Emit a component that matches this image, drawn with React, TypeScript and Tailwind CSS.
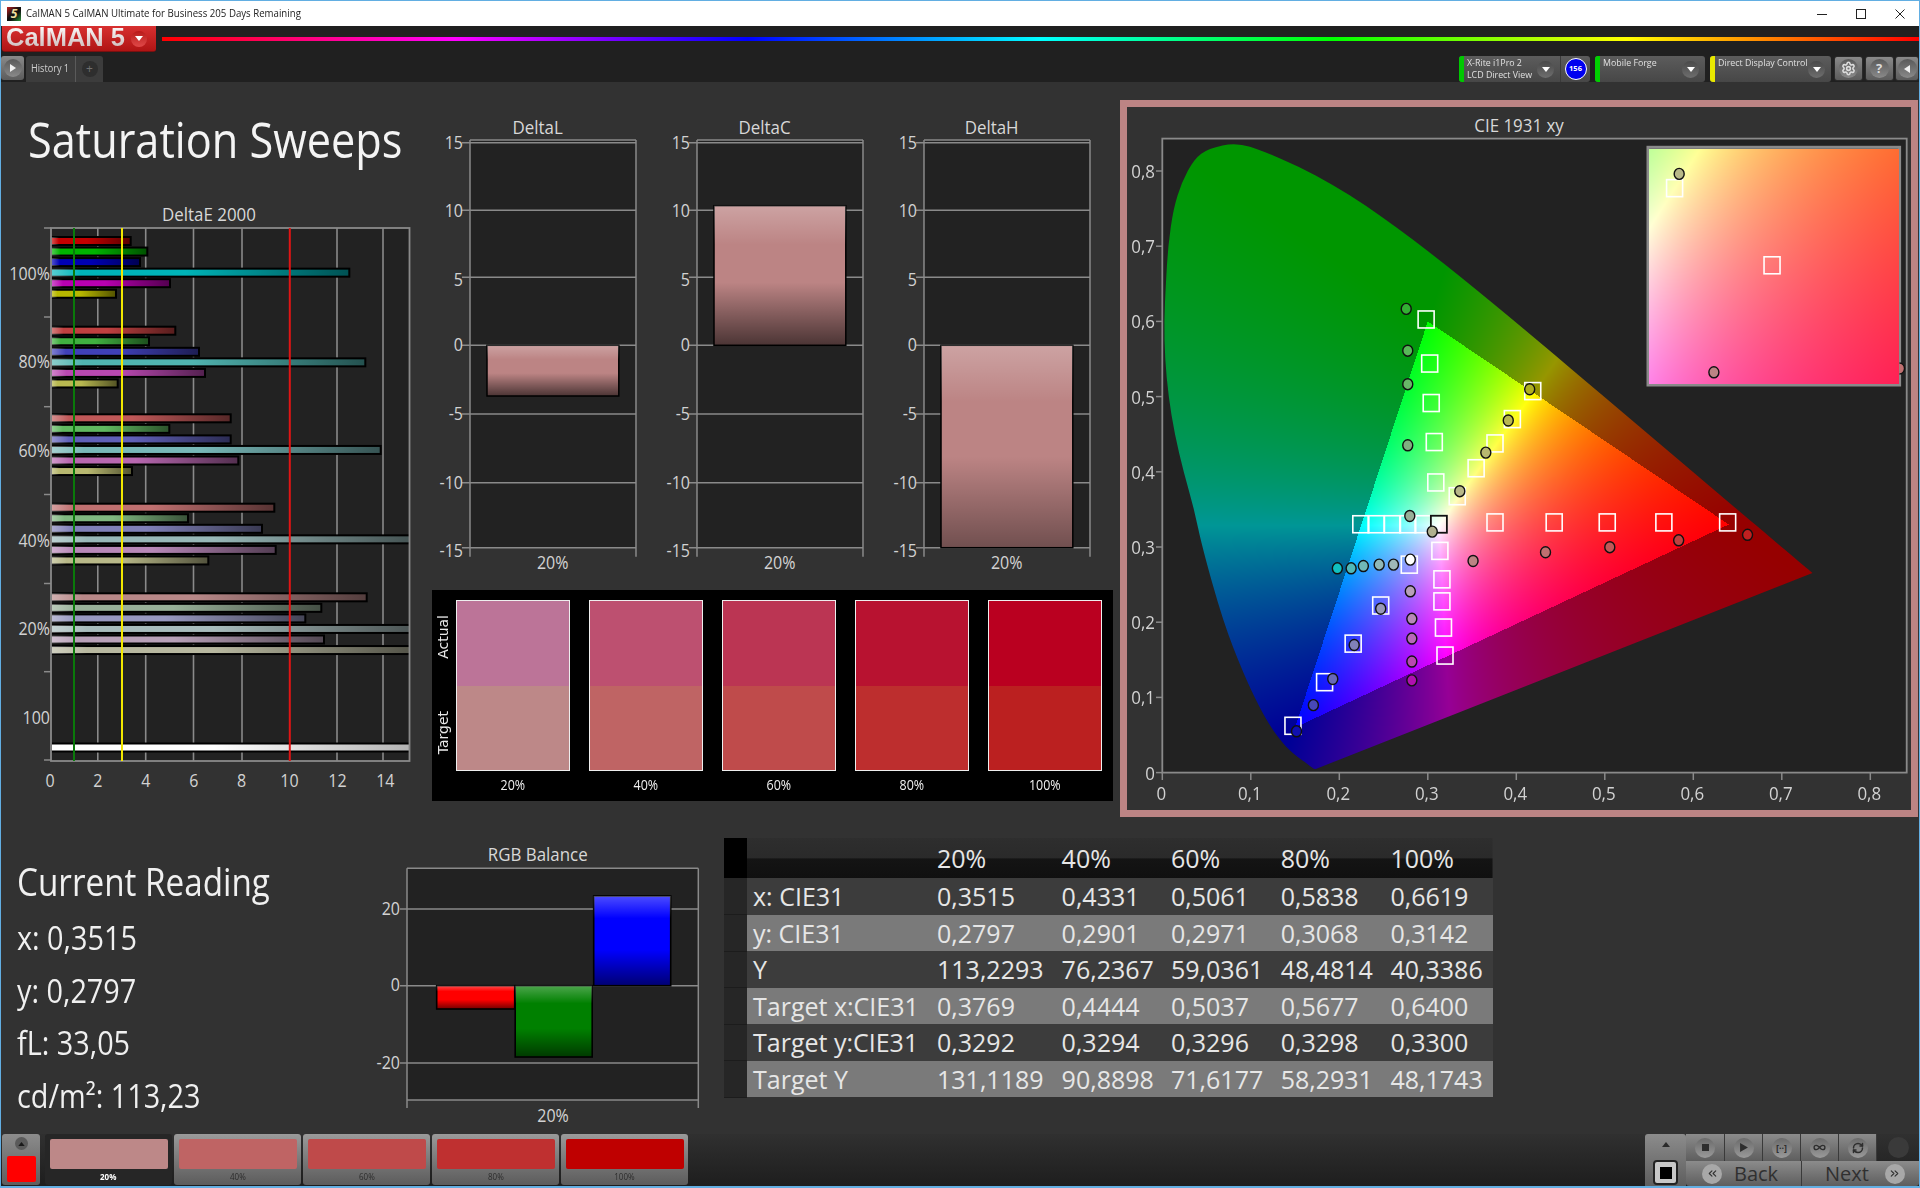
import React, { useEffect, useRef } from 'react';
import { ChevronsLeft, ChevronsRight, Infinity as InfinityIcon, RefreshCw, Settings } from 'lucide-react';

const LOCUS = [
  [0.1741, 0.005], [0.174, 0.005], [0.1733, 0.0048], [0.1726, 0.0048], [0.1714, 0.0051], [0.1703, 0.0058],
  [0.1689, 0.0069], [0.1669, 0.0086], [0.1644, 0.0109], [0.1611, 0.0138], [0.1566, 0.0177], [0.151, 0.0227],
  [0.144, 0.0297], [0.1355, 0.0399], [0.1241, 0.0578], [0.1096, 0.0868], [0.0913, 0.1327], [0.0687, 0.2007],
  [0.045, 0.3], [0.036, 0.35], [0.024, 0.4], [0.014, 0.45], [0.007, 0.5], [0.003, 0.55], [0.002, 0.6],
  [0.004, 0.65], [0.0065, 0.7], [0.0125, 0.75], [0.022, 0.785], [0.036, 0.816], [0.052, 0.83], [0.084, 0.838],
  [0.1142, 0.8262], [0.1547, 0.8059], [0.1929, 0.7816], [0.2296, 0.7543], [0.2658, 0.7243],
  [0.3016, 0.6923], [0.3373, 0.6589], [0.3731, 0.6245], [0.4087, 0.5896], [0.4441, 0.5547], [0.4788, 0.5202],
  [0.5125, 0.4866], [0.5448, 0.4544], [0.5752, 0.4242], [0.6029, 0.3965], [0.627, 0.3725], [0.6482, 0.3514],
  [0.6658, 0.334], [0.6801, 0.3197], [0.6915, 0.3083], [0.7006, 0.2993], [0.7079, 0.292], [0.714, 0.2859],
  [0.719, 0.2809], [0.726, 0.274], [0.73, 0.27], [0.7347, 0.2653],
];

// xy to a display colour: full brightness inside the Rec709 triangle, dimmed outside it
const xyColor = (x: number, y: number) => {
  const X = x / y;
  const Z = (1 - x - y) / y;
  const r = 3.2406 * X - 1.5372 - 0.4986 * Z;
  const g = -0.9689 * X + 1.8758 + 0.0415 * Z;
  const b = 0.0557 * X - 0.204 + 1.057 * Z;
  const inside = r >= 0 && g >= 0 && b >= 0;
  const R = Math.max(r, 0);
  const G = Math.max(g, 0);
  const B = Math.max(b, 0);
  const m = Math.max(R, G, B);
  const k = (inside ? 255 : 150) / m;
  return [R * k, G * k, B * k];
};

const GamutCanvas = ({ width, height, toXY, clip }: {
  width: number;
  height: number;
  toXY: (i: number, j: number) => number[];
  clip?: number[][];
}) => {
  const ref = useRef<HTMLCanvasElement>(null);
  useEffect(() => {
    const cv = ref.current;
    if (!cv) return;
    const off = document.createElement('canvas');
    off.width = width;
    off.height = height;
    const oc = off.getContext('2d')!;
    const img = oc.createImageData(width, height);
    for (let j = 0; j < height; j++) {
      for (let i = 0; i < width; i++) {
        const [x, y] = toXY(i, j);
        const c = xyColor(x, y);
        const p = (j * width + i) * 4;
        img.data[p] = c[0];
        img.data[p + 1] = c[1];
        img.data[p + 2] = c[2];
        img.data[p + 3] = 255;
      }
    }
    oc.putImageData(img, 0, 0);
    const ctx = cv.getContext('2d')!;
    ctx.clearRect(0, 0, width, height);
    if (clip) {
      ctx.beginPath();
      ctx.moveTo(clip[0][0], clip[0][1]);
      for (let n = 1; n < clip.length - 1; n++) {
        const mx = (clip[n][0] + clip[n + 1][0]) / 2;
        const my = (clip[n][1] + clip[n + 1][1]) / 2;
        ctx.quadraticCurveTo(clip[n][0], clip[n][1], mx, my);
      }
      ctx.lineTo(clip[clip.length - 1][0], clip[clip.length - 1][1]);
      ctx.closePath();
      ctx.clip();
    }
    ctx.drawImage(off, 0, 0);
  }, []);
  return <canvas ref={ref} width={width} height={height} className="block" />;
};

const TICK = '#8a8a8a';
const AXIS = '#d2d2d2';

// chart text, narrowed to the width of the original face
const Lbl = ({ x, y, size = 18, anchor = 'middle', fill = AXIS, children }: {
  x: number;
  y: number;
  size?: number;
  anchor?: 'middle' | 'end';
  fill?: string;
  children: React.ReactNode;
}) => (
  <text transform={`translate(${x} ${y}) scale(0.89 1)`} textAnchor={anchor} fontSize={size} fill={fill}>{children}</text>
);

const barGroups = [
  { y: 241, ends: [130.7, 147.3, 140, 349.3, 170, 116], colors: ['#c40000', '#00b400', '#0000b4', '#00b4b8', '#b800b0', '#b8b800'] },
  { y: 330.7, ends: [175.3, 149, 199, 365.3, 205, 117.7], colors: ['#c04040', '#40b040', '#4040b8', '#50b4b0', '#b848b0', '#b8b850'] },
  { y: 418.3, ends: [230.7, 169.3, 230.7, 380.7, 238.3, 132], colors: ['#c05858', '#60b860', '#6060b8', '#78b8b8', '#b868b0', '#b8b870'] },
  { y: 507.7, ends: [274.3, 188, 262, 412, 275.7, 208.3], colors: ['#c07070', '#80b880', '#8080b8', '#98b8b8', '#b888b8', '#b8b888'] },
  { y: 597.3, ends: [366.7, 321.3, 305.3, 412, 324, 412], colors: ['#b88888', '#98b098', '#9898c0', '#a8bcbc', '#b8a0b8', '#b8b8a0'] },
];

const DeltaE = () => (
  <svg viewBox="1 200 429 600" className="block w-[429px] h-[600px]">
    <defs>
      <linearGradient id="hbar">
        <stop offset="0" stopColor="#fff" stopOpacity="0.35" />
        <stop offset="0.1" stopColor="#fff" stopOpacity="0" />
        <stop offset="0.45" stopColor="#000" stopOpacity="0" />
        <stop offset="1" stopColor="#000" stopOpacity="0.55" />
      </linearGradient>
      <linearGradient id="hwhite">
        <stop offset="0.45" stopColor="#000" stopOpacity="0" />
        <stop offset="1" stopColor="#000" stopOpacity="0.3" />
      </linearGradient>
      <clipPath id="deplot">
        <rect x="51" y="228" width="358.5" height="533" />
      </clipPath>
    </defs>
    <Lbl x={209} y={221} size={19} fill="#d8d8d8">DeltaE 2000</Lbl>
    <rect x="51" y="228" width="358.5" height="533" fill="#222222" />
    {[97.8, 145.7, 193.5, 242, 337, 383].map((x) => (
      <line key={x} x1={x} x2={x} y1="228" y2="761" stroke={TICK} strokeWidth="1.6" />
    ))}
    {[228, 317, 406.7, 494.5, 583.5, 671.7, 760].map((y) => (
      <line key={y} x1="44" x2="51" y1={y} y2={y} stroke={TICK} strokeWidth="1.5" />
    ))}
    <g clipPath="url(#deplot)">
      {barGroups.map((g) =>
        g.ends.map((end, n) => (
          <g key={`${g.y}-${n}`}>
            <rect x="51" y={g.y + n * 10.55 - 4} width={end - 51} height="8" fill={g.colors[n]} stroke="#000" strokeWidth="2" />
            <rect x="51" y={g.y + n * 10.55 - 4} width={end - 51} height="8" fill="url(#hbar)" />
          </g>
        ))
      )}
      <rect x="51" y="743.5" width="361" height="8" fill="#ffffff" stroke="#000" strokeWidth="2" />
      <rect x="51" y="743.5" width="361" height="8" fill="url(#hwhite)" />
    </g>
    <rect x="51" y="228" width="358.5" height="533" fill="none" stroke={TICK} strokeWidth="1.8" />
    <line x1="74" x2="74" y1="228" y2="761" stroke="#0a7a0a" strokeWidth="2" />
    <line x1="122" x2="122" y1="228" y2="761" stroke="#f2e800" strokeWidth="2" />
    <line x1="289.8" x2="289.8" y1="228" y2="761" stroke="#e01414" strokeWidth="2" />
    {[
      ['100%', 274], ['80%', 362], ['60%', 451], ['40%', 541], ['20%', 629], ['100', 718],
    ].map(([t, y]) => (
      <Lbl key={t} x={50} y={Number(y) + 5.5} anchor="end">{t}</Lbl>
    ))}
    {[0, 2, 4, 6, 8, 10, 12, 14].map((v, n) => (
      <Lbl key={v} x={50 + n * 47.9} y={787}>{v}</Lbl>
    ))}
  </svg>
);

const deltaRows: [string, number, number][] = [
  ['15', 142.7, 143], ['10', 210.3, 211], ['5', 277.3, 280], ['0', 345.3, 346],
  ['-5', 414, 415], ['-10', 482.7, 484], ['-15', 547.7, 552],
];

const DeltaChart = ({ id, title, from, to, fade }: { id: string; title: string; from: number; to: number; fade: number }) => (
  <svg viewBox="0 110 226.8 470" className="block w-[226.8px] h-[470px]">
    <defs>
      <linearGradient id={id} x2="0" y2="1">
        <stop offset="0" stopColor="#fff" stopOpacity="0.25" />
        <stop offset="0.28" stopColor="#fff" stopOpacity="0" />
        <stop offset="0.55" stopColor="#000" stopOpacity="0" />
        <stop offset="1" stopColor="#000" stopOpacity={fade} />
      </linearGradient>
    </defs>
    <Lbl x={107.6} y={133.5} size={19} fill="#d8d8d8">{title}</Lbl>
    <rect x="40" y="140" width="166" height="407.7" fill="#222222" />
    <line x1="40" x2="206" y1="140" y2="140" stroke={TICK} strokeWidth="1.5" />
    {deltaRows.map(([t, y, ly]) => (
      <g key={t}>
        <line x1="32" x2="206" y1={y} y2={y} stroke={TICK} strokeWidth="1.5" />
        <Lbl x={33} y={ly + 5.5} anchor="end">{t}</Lbl>
      </g>
    ))}
    <line x1="40" x2="40" y1="140" y2="556.7" stroke={TICK} strokeWidth="1.5" />
    <line x1="206" x2="206" y1="140" y2="556.7" stroke={TICK} strokeWidth="1.5" />
    <rect x="57" y={from} width="131.8" height={to - from} fill="#bc8484" stroke="#000" strokeWidth="1.5" />
    <rect x="57" y={from} width="131.8" height={to - from} fill={`url(#${id})`} />
    <Lbl x={122.7} y={569}>20%</Lbl>
  </svg>
);

const sweep = [
  { label: '20%', actual: '#bc7498', target: '#bd8888' },
  { label: '40%', actual: '#bd5070', target: '#bf6464' },
  { label: '60%', actual: '#bb3553', target: '#bf4b4b' },
  { label: '80%', actual: '#b81230', target: '#bd2e2e' },
  { label: '100%', actual: '#ba0020', target: '#bb2020' },
];

const SweepPanel = () => (
  <div className="ml-[2px] mt-[10px] w-[681px] h-[211px] bg-black flex pt-[10px]">
    <div className="w-[23px] flex flex-col items-center text-[14px] font-['DejaVu_Sans',sans-serif] text-[#e8e8e8]">
      <div className="h-[74px] flex items-center justify-center"><span className="[writing-mode:vertical-rl] rotate-180">Actual</span></div>
      <div className="h-[118px] flex items-center justify-center"><span className="[writing-mode:vertical-rl] rotate-180">Target</span></div>
    </div>
    <div className="ml-[1px] flex gap-[19.5px]">
      {sweep.map((s) => (
        <div key={s.label} className="w-[113.5px] flex flex-col items-center">
          <div className="w-full h-[171px] border-[1.5px] border-[#eeeeee] flex flex-col">
            <div className="flex-1" style={{ background: s.actual }} />
            <div className="flex-1" style={{ background: s.target }} />
          </div>
          <div className="mt-[4px] text-[14px] leading-[20px] scale-x-[.89] text-[#f0f0f0]">{s.label}</div>
        </div>
      ))}
    </div>
  </div>
);

// positions read off the plot, as picture coordinates
const zx = (x: number) => 1120 + x / 1.96;
const zy = (y: number) => 100 + y / 2.178;

const targets = [
  [600, 478], [607, 574], [610, 660], [616, 745], [619, 833],
  [809, 634], [769, 695], [735, 748], [698, 802], [661, 863],
  [472, 924], [502, 924], [534, 924], [564, 924], [594, 924],
  [339, 1363], [401, 1268], [457, 1184], [511, 1101], [567, 1012],
  [637, 1210], [634, 1149], [631, 1092], [631, 1044], [627, 982],
  [735, 920], [851, 920], [955, 920], [1066, 920], [1191, 920],
];

const readings: [number, number, string][] = [
  [561, 455, '#33b033'], [564, 546, '#58b858'], [564, 619, '#68b868'], [564, 752, '#80b080'], [568, 906, '#98b098'],
  [803, 630, '#b0b020'], [761, 698, '#b8b850'], [717, 768, '#b8b870'], [666, 852, '#b8b888'], [612, 940, '#b0b090'],
  [426, 1020, '#10c0c0'], [453, 1020, '#50b8b8'], [477, 1015, '#70b8b8'], [508, 1012, '#90b8b8'], [536, 1012, '#a0b8b8'],
  [346, 1375, '#1010b0'], [379, 1318, '#4848b8'], [417, 1261, '#6868b8'], [459, 1187, '#8080b8'], [511, 1108, '#9898b8'],
  [572, 1264, '#b010b0'], [572, 1223, '#b848b0'], [572, 1173, '#b868b8'], [572, 1130, '#b888b8'], [569, 1070, '#b8a0b8'],
  [1230, 947, '#c02020'], [1095, 959, '#c04040'], [960, 974, '#c05858'], [834, 985, '#c07070'], [692, 1004, '#bc8484'],
  [569, 1001, '#ffffff'],
];

const sx = (x: number) => 1162.3 + 885 * x;
const sy = (y: number) => 772.6 - 752 * y;
const locusPx = LOCUS.map(([x, y]) => [sx(x) - 1162, sy(y) - 139]);

const CieChart = () => (
  <div className="mt-[18px] w-[798px] h-[717px] border-[7px] border-[#bc8484] bg-[#323232]">
    <svg viewBox="1127 107 784 703" className="block w-[784px] h-[703px]">
      <Lbl x={1519} y={132} size={19} fill="#d8d8d8">CIE 1931 xy</Lbl>
      <rect x="1162.3" y="138.6" width="744.4" height="634" fill="#222222" />
      <foreignObject x="1162" y="139" width="745" height="634">
        <GamutCanvas
          width={745}
          height={634}
          clip={locusPx}
          toXY={(i, j) => [(1162 + i + 0.5 - 1162.3) / 885, (772.6 - (139 + j + 0.5)) / 752]}
        />
      </foreignObject>
      <rect x="1162.3" y="138.6" width="744.4" height="634" fill="none" stroke={TICK} strokeWidth="1.8" />
      {[0, 1, 2, 3, 4, 5, 6, 7, 8].map((n) => (
        <g key={n}>
          <line x1={sx(n / 10)} x2={sx(n / 10)} y1="772.6" y2="780" stroke={TICK} strokeWidth="1.5" />
          <line x1="1156" x2="1162.3" y1={sy(n / 10)} y2={sy(n / 10)} stroke={TICK} strokeWidth="1.5" />
          <Lbl x={sx(n / 10) - 1} y={800} size={19}>{n ? `0,${n}` : '0'}</Lbl>
          <Lbl x={1155} y={sy(n / 10) + 7} size={19} anchor="end">{n ? `0,${n}` : '0'}</Lbl>
        </g>
      ))}
      {targets.map(([x, y]) => (
        <rect key={`${x}-${y}`} x={zx(x) - 8} y={zy(y) - 8.5} width="16" height="17" fill="none" stroke="#ffffff" strokeWidth="1.6" />
      ))}
      <rect x={zx(625) - 8} y={zy(924) - 8.5} width="16" height="17" fill="#ffffff" fillOpacity="0.25" stroke="#111111" strokeWidth="1.8" />
      {readings.map(([x, y, c]) => (
        <ellipse key={`${x}-${y}`} cx={zx(x)} cy={zy(y)} rx="5" ry="5.5" fill={c} stroke="#111111" strokeWidth="1.4" />
      ))}
      <rect x="1648" y="147.3" width="251.6" height="237.7" fill="#333333" stroke={TICK} strokeWidth="3" />
      <foreignObject x="1649" y="149" width="250" height="235">
        <GamutCanvas
          width={250}
          height={235}
          toXY={(i, j) => [0.3228 + ((i + 1) / 250) * 0.1098, 0.3838 - ((j + 2) / 237) * 0.11]}
        />
      </foreignObject>
      <rect x={zx(1087) - 8} y={zy(192) - 8.5} width="16" height="17" fill="none" stroke="#ffffff" strokeWidth="1.6" />
      <rect x={zx(1278) - 8} y={zy(360) - 8.5} width="16" height="17" fill="none" stroke="#ffffff" strokeWidth="1.6" />
      <ellipse cx={zx(1096)} cy={zy(161)} rx="5" ry="5.5" fill="#b8b888" stroke="#111111" strokeWidth="1.4" />
      <ellipse cx={zx(1164)} cy={zy(593)} rx="5" ry="5.5" fill="#bc8484" stroke="#111111" strokeWidth="1.4" />
      <path d="M1899.5 374 a5 5.5 0 0 0 0 -11" fill="#c07070" stroke="#111111" strokeWidth="1.4" />
    </svg>
  </div>
);

const RgbBalance = () => (
  <svg viewBox="370 830 354 300" className="block w-[354px] h-[300px]">
    <defs>
      <linearGradient id="vbar" x2="0" y2="1">
        <stop offset="0" stopColor="#fff" stopOpacity="0.3" />
        <stop offset="0.25" stopColor="#fff" stopOpacity="0" />
        <stop offset="0.6" stopColor="#000" stopOpacity="0" />
        <stop offset="1" stopColor="#000" stopOpacity="0.55" />
      </linearGradient>
    </defs>
    <Lbl x={537.7} y={861} size={19} fill="#d8d8d8">RGB Balance</Lbl>
    <rect x="407" y="868.3" width="291.3" height="231.7" fill="#222222" />
    <line x1="407" x2="698.3" y1="868.3" y2="868.3" stroke={TICK} strokeWidth="1.5" />
    <line x1="407" x2="698.3" y1="1100" y2="1100" stroke={TICK} strokeWidth="1.5" />
    <line x1="407" x2="407" y1="868.3" y2="1108" stroke={TICK} strokeWidth="1.5" />
    <line x1="698.3" x2="698.3" y1="868.3" y2="1108" stroke={TICK} strokeWidth="1.5" />
    {[['20', 909], ['0', 985.7], ['-20', 1063]].map(([t, y]) => (
      <g key={t}>
        <line x1="400" x2="698.3" y1={y} y2={y} stroke={TICK} strokeWidth="1.5" />
        <Lbl x={400} y={Number(y) + 5.5} anchor="end">{t}</Lbl>
      </g>
    ))}
    {[
      { x: 436.7, y: 985.7, w: 78, h: 23.3, c: '#ff0000' },
      { x: 515.2, y: 985.7, w: 77, h: 71.3, c: '#008000' },
      { x: 593.7, y: 896, w: 77, h: 89.7, c: '#0000ff' },
    ].map((b) => (
      <g key={b.c}>
        <rect x={b.x} y={b.y} width={b.w} height={b.h} fill={b.c} stroke="#000" strokeWidth="1.6" />
        <rect x={b.x} y={b.y} width={b.w} height={b.h} fill="url(#vbar)" />
      </g>
    ))}
    <Lbl x={553} y={1122}>20%</Lbl>
  </svg>
);

const tableRows = [
  ['x: CIE31', '0,3515', '0,4331', '0,5061', '0,5838', '0,6619'],
  ['y: CIE31', '0,2797', '0,2901', '0,2971', '0,3068', '0,3142'],
  ['Y', '113,2293', '76,2367', '59,0361', '48,4814', '40,3386'],
  ['Target x:CIE31', '0,3769', '0,4444', '0,5037', '0,5677', '0,6400'],
  ['Target y:CIE31', '0,3292', '0,3294', '0,3296', '0,3298', '0,3300'],
  ['Target Y', '131,1189', '90,8898', '71,6177', '58,2931', '48,1743'],
];

const ReadingTable = () => (
  <table className="self-start mt-[18px] w-[769px] table-fixed border-collapse text-[25px] leading-[34px] text-[#e6e6e6]">
    <colgroup>
      <col className="w-[23px]" />
      <col className="w-[190px]" />
      <col className="w-[124.6px]" />
      <col className="w-[109.4px]" />
      <col className="w-[109.7px]" />
      <col className="w-[109.8px]" />
      <col className="w-[102.5px]" />
    </colgroup>
    <thead>
      <tr className="h-[40px] bg-[linear-gradient(#2e2e2e_0%,#2a2a2a_50%,#141414_52%,#101010_100%)]">
        <th className="bg-black" />
        <th />
        {['20%', '40%', '60%', '80%', '100%'].map((h) => (
          <th key={h} className="text-left font-normal">{h}</th>
        ))}
      </tr>
    </thead>
    <tbody>
      {tableRows.map((row, n) => (
        <tr key={row[0]} className={n % 2 ? 'h-[36.5px] bg-[#7a7a7a]' : 'h-[36.5px] bg-[#3c3c3c]'}>
          <td className="bg-[#262626] border-b border-[#1c1c1c]" />
          {row.map((c, i) => (
            <td key={i} className={i ? 'whitespace-nowrap p-0' : 'whitespace-nowrap p-0 pl-[6px]'}>{c}</td>
          ))}
        </tr>
      ))}
    </tbody>
  </table>
);

const Knob = ({ className = '', size = 'w-[17px] h-[17px]' }: { className?: string; size?: string }) => (
  <div className={`${size} rounded-full bg-linear-to-b from-[#4a4a4a] to-[#6e6e6e] flex items-center justify-center shrink-0 ${className}`}>
    <svg viewBox="0 0 8 5" className="w-[8px] h-[5px]"><path d="M0 0h8L4 5z" fill="#ffffff" /></svg>
  </div>
);

const Source = ({ strip, w, lines, children }: { strip: string; w: string; lines: string[]; children?: React.ReactNode }) => (
  <div className={`${w} h-[26px] rounded-[3px] bg-linear-to-b from-[#5c5c5c] to-[#474747] flex items-stretch overflow-hidden`}>
    <div className="w-[5px] shrink-0" style={{ background: strip }} />
    <div className="flex-1 min-w-0 pl-[3px] text-[9.5px] leading-[12px] pt-[1px] text-[#e0e0e0] whitespace-nowrap">
      {lines.map((l) => <div key={l} className="scale-x-[.93] origin-left">{l}</div>)}
    </div>
    <div className="flex items-center pr-[6px]"><Knob /></div>
    {children}
  </div>
);

const GrayButton = ({ w, children }: { w: string; children: React.ReactNode }) => (
  <div className={`${w} h-[25px] rounded-[3px] border border-[#2a2a2a] bg-linear-to-b from-[#8a8a8a] to-[#5c5c5c] flex items-center justify-center`}>
    <div className="w-[19px] h-[19px] rounded-full bg-linear-to-b from-[#5a5a5a] to-[#8a8a8a] flex items-center justify-center text-[#dcdcdc]">{children}</div>
  </div>
);

const Tile = ({ w, children }: { w: string; children: React.ReactNode }) => (
  <div className={`${w} h-[27px] border-r border-[#3a3a3a] bg-linear-to-b from-[#8c8c8c] to-[#5e5e5e] flex items-center justify-center`}>
    <div className="w-[20px] h-[20px] rounded-full bg-linear-to-b from-[#6a6a6a] to-[#9a9a9a] flex items-center justify-center text-[#2e2e2e]">{children}</div>
  </div>
);

const stepColors = ['#bd8888', '#bf6464', '#bf4a4a', '#bf3030', '#bf0000'];

const App = () => (
  <div className="w-[1920px] h-[1188px] flex flex-col border border-b-2 border-[#62aee2] bg-[#323232] font-['Open_Sans',sans-serif] overflow-hidden">
    <div className="h-[25px] shrink-0 bg-white flex items-center pl-[6px] pr-[13px] text-[10.5px] text-[#222222]">
      <div className="w-[14px] h-[14px] bg-[linear-gradient(135deg,#c02020,#111_45%,#111_60%,#2a9a3a)] flex items-center justify-center text-[12px] leading-none font-bold italic text-[#f0e0a0]">5</div>
      <div className="ml-[5px] scale-x-[.92] origin-left whitespace-nowrap">CalMAN 5 CalMAN Ultimate for Business 205 Days Remaining</div>
      <div className="ml-auto flex items-center gap-[27px]">
        <svg viewBox="0 0 12 12" className="w-[12px] h-[12px]"><path d="M1 6.5h10" stroke="#222" strokeWidth="1" /></svg>
        <svg viewBox="0 0 12 12" className="w-[12px] h-[12px]"><rect x="1.5" y="1.5" width="9" height="9" fill="none" stroke="#222" strokeWidth="1" /></svg>
        <svg viewBox="0 0 12 12" className="w-[12px] h-[12px]"><path d="M1.5 1.5l9 9M10.5 1.5l-9 9" stroke="#222" strokeWidth="1" /></svg>
      </div>
    </div>

    <div className="h-[29px] shrink-0 bg-[#202020] flex">
      <div className="ml-[1px] w-[154px] h-[26px] rounded-b-[3px] bg-linear-to-b from-[#d83030] to-[#b01414] flex items-center pl-[4px] border-b border-[#7a1010]">
        <span className="font-['Liberation_Sans',sans-serif] font-bold text-[25.5px] leading-none mt-[-1px] whitespace-nowrap bg-linear-to-b from-[#ffffff] to-[#c8b4b4] bg-clip-text text-transparent">CalMAN 5</span>
        <Knob className="ml-[6px] from-[#b81818]! to-[#e04848]!" size="w-[16px] h-[16px]" />
      </div>
      <div className="ml-[6px] mt-[11px] flex-1 h-[4px] bg-[linear-gradient(90deg,#ff0000,#ff00ff,#0000ff,#00ffff,#00ff00,#ffff00,#ff0000)]" />
    </div>

    <div className="h-[27px] shrink-0 bg-[#202020] flex items-start pt-[1px]">
      <div className="w-[23px] h-[24px] rounded-[3px] bg-linear-to-b from-[#8a8a8a] to-[#5c5c5c] flex items-center justify-center">
        <div className="w-[18px] h-[18px] rounded-full bg-linear-to-b from-[#5a5a5a] to-[#8a8a8a] flex items-center justify-center">
          <svg viewBox="0 0 6 8" className="w-[6px] h-[8px]"><path d="M0 0l6 4-6 4z" fill="#f0f0f0" /></svg>
        </div>
      </div>
      <div className="ml-[2px] w-[77px] h-[26px] rounded-t-[3px] bg-[#3c3c3c] flex items-center text-[10.5px] text-[#cfcfcf]">
        <div className="pl-[5px] w-[50px] whitespace-nowrap border-r border-[#5a5a5a] h-full flex items-center">
          <span className="scale-x-[.87] origin-left">History 1</span>
        </div>
        <div className="flex-1 flex justify-center">
          <div className="w-[16px] h-[16px] rounded-full bg-[#2e2e2e] flex items-center justify-center text-[#707070] text-[12px] leading-none">+</div>
        </div>
      </div>
      <div className="ml-auto flex items-start gap-[5px]">
        <Source strip="#00c800" w="w-[131px]" lines={['X-Rite i1Pro 2', 'LCD Direct View']}>
          <div className="w-[30px] shrink-0 border-l border-[#3a3a3a] flex items-center justify-center">
            <div className="w-[22px] h-[22px] rounded-full bg-[#0000f0] border border-white flex items-center justify-center text-[7.5px] font-bold text-white">156</div>
          </div>
        </Source>
        <Source strip="#00d000" w="w-[110px]" lines={['Mobile Forge']} />
        <Source strip="#e8e800" w="w-[121px]" lines={['Direct Display Control']} />
        <div className="flex gap-[1.5px] -ml-[2px]">
          <GrayButton w="w-[29px]"><Settings size={15} strokeWidth={2.5} /></GrayButton>
          <GrayButton w="w-[29px]"><span className="text-[13px] font-bold leading-none">?</span></GrayButton>
          <GrayButton w="w-[24px]"><svg viewBox="0 0 6 8" className="w-[6px] h-[8px]"><path d="M6 0L0 4l6 4z" fill="#f0f0f0" /></svg></GrayButton>
        </div>
      </div>
    </div>

    <div className="h-[1052px] shrink-0 flex flex-col">
      <div className="h-[738px] flex">
        <div className="w-[429px]">
          <div className="h-[118px] pl-[27px] pb-[5px] flex items-center text-[50px] leading-none text-[#f4f4f4] whitespace-nowrap">
            <span className="scale-x-[.865] origin-left">Saturation Sweeps</span>
          </div>
          <DeltaE />
        </div>
        <div className="w-[690px]">
          <div className="mt-[28px] flex">
            <DeltaChart id="dl" title="DeltaL" from={345.3} to={396} fade={0.6} />
            <DeltaChart id="dc" title="DeltaC" from={205.7} to={345.3} fade={0.6} />
            <DeltaChart id="dh" title="DeltaH" from={345.3} to={547.7} fade={0.4} />
          </div>
          <SweepPanel />
        </div>
        <CieChart />
      </div>
      <div className="h-[314px] flex">
        <div className="w-[369px] pl-[16px] pt-[36px] text-[#f0f0f0] whitespace-nowrap">
          <div className="text-[38px] leading-[50px] scale-x-[.875] origin-left">Current Reading</div>
          <div className="mt-[6px] text-[32px] leading-[52.7px] scale-x-[.9] origin-left">x: 0,3515</div>
          <div className="text-[32px] leading-[52.7px] scale-x-[.9] origin-left">y: 0,2797</div>
          <div className="text-[32px] leading-[52.7px] scale-x-[.9] origin-left">fL: 33,05</div>
          <div className="text-[32px] leading-[52.7px] scale-x-[.9] origin-left">cd/m²: 113,23</div>
        </div>
        <div className="w-[354px] pt-[10px]"><RgbBalance /></div>
        <ReadingTable />
      </div>
    </div>

    <div className="h-[52px] shrink-0 bg-linear-to-b from-[#303030] to-[#1e1e1e] flex">
      <div className="ml-[1px] w-[38px] h-[51px] rounded-[3px] bg-linear-to-b from-[#8c8c8c] to-[#5e5e5e] flex flex-col items-center">
        <div className="mt-[3px] w-[13px] h-[13px] rounded-full bg-[#5a5a5a] flex items-center justify-center">
          <svg viewBox="0 0 8 5" className="w-[7px] h-[4px]"><path d="M0 5h8L4 0z" fill="#1a1a1a" /></svg>
        </div>
        <div className="mt-[6px] w-[29px] h-[26px] rounded-[2px] bg-[#ff0000]" />
      </div>
      <div className="ml-[5px] flex gap-[2px]">
        {stepColors.map((c, n) => (
          <div key={c} className={n ? 'w-[127px] h-[51px] rounded-[3px] bg-linear-to-b from-[#9a9a9a] to-[#5c5c5c] flex flex-col items-center pt-[5px]' : 'w-[127px] h-[51px] rounded-[3px] bg-[#262626] flex flex-col items-center pt-[5px]'}>
            <div className="w-[118px] h-[30px] rounded-[2px]" style={{ background: c }} />
            <div className={n ? 'text-[9px] leading-[16px] text-[#2c2c2c] scale-x-[.89]' : 'text-[9px] leading-[16px] font-bold text-white scale-x-[.89]'}>{`${(n + 1) * 20}%`}</div>
          </div>
        ))}
      </div>
      <div className="ml-auto flex">
        <div className="w-[41px] h-[52px] rounded-t-[3px] bg-linear-to-b from-[#8c8c8c] to-[#5e5e5e] flex flex-col items-center">
          <svg viewBox="0 0 8 5" className="mt-[8px] w-[8px] h-[5px]"><path d="M0 5h8L4 0z" fill="#2a2a2a" /></svg>
          <div className="mt-[13px] w-[25px] h-[25px] rounded-[4px] border-2 border-[#222] bg-[#c8c8c8] flex items-center justify-center">
            <div className="w-[12px] h-[12px] bg-black" />
          </div>
        </div>
        <div className="w-[233px] flex flex-col">
          <div className="flex">
            <Tile w="w-[39px]"><div className="w-[7px] h-[7px] bg-[#2e2e2e]" /></Tile>
            <Tile w="w-[38px]"><svg viewBox="0 0 7 8" className="w-[8px] h-[9px]"><path d="M0 0l7 4-7 4z" fill="#2e2e2e" /></svg></Tile>
            <Tile w="w-[38px]"><span className="text-[9px] font-bold leading-none">[··]</span></Tile>
            <Tile w="w-[38px]"><InfinityIcon size={13} strokeWidth={2.5} /></Tile>
            <Tile w="w-[38px]"><RefreshCw size={12} strokeWidth={3} /></Tile>
            <div className="flex-1 flex items-center justify-center">
              <div className="w-[21px] h-[21px] rounded-full bg-[#3a3a3a]" />
            </div>
          </div>
          <div className="flex h-[25px] bg-linear-to-b from-[#8c8c8c] to-[#5e5e5e] rounded-b-[3px] text-[20px] font-medium text-[#303030] font-stretch-[90%]">
            <div className="w-[116px] border-r border-[#3a3a3a] flex items-center pl-[16px]">
              <div className="w-[20px] h-[20px] rounded-full bg-[#a8a8a8] flex items-center justify-center"><ChevronsLeft size={13} /></div>
              <div className="ml-[12px] leading-none">Back</div>
            </div>
            <div className="flex-1 flex items-center">
              <div className="ml-[23px] leading-none">Next</div>
              <div className="ml-[16px] w-[20px] h-[20px] rounded-full bg-[#a8a8a8] flex items-center justify-center"><ChevronsRight size={13} /></div>
            </div>
          </div>
        </div>
      </div>
    </div>
  </div>
);

export default App;
